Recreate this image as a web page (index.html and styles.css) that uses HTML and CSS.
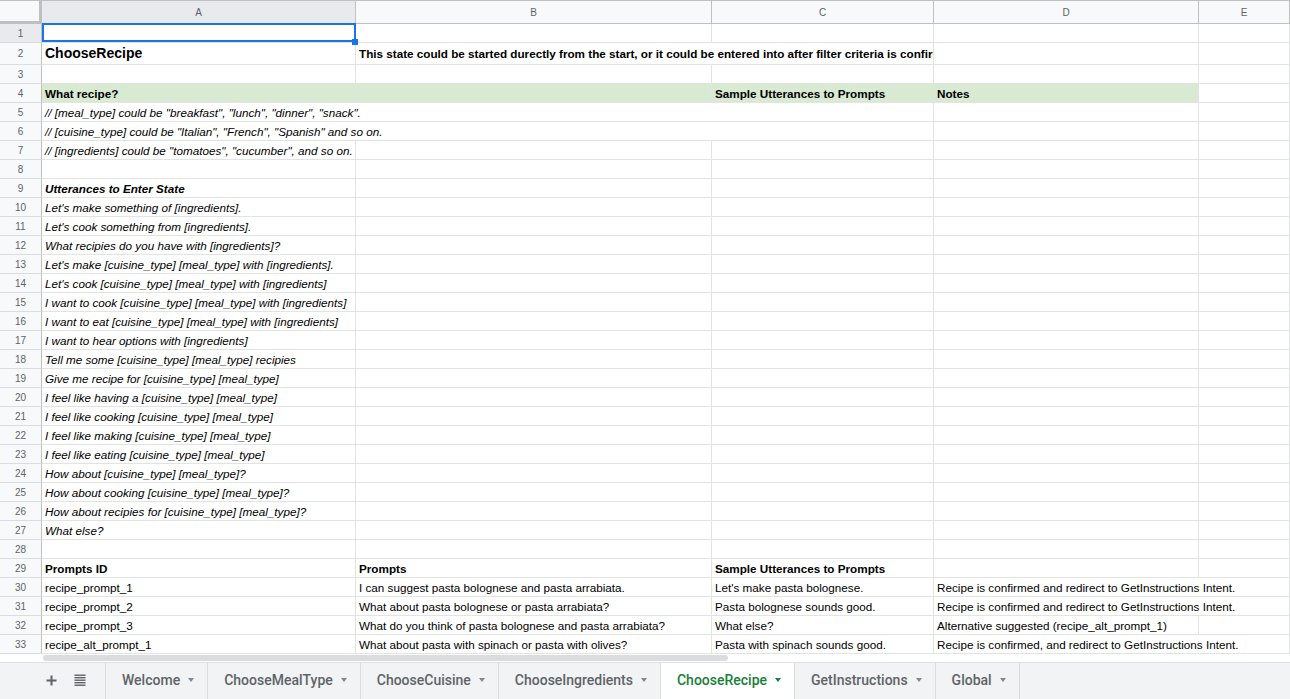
FILE: index.html
```html
<!DOCTYPE html>
<html>
<head>
<meta charset="utf-8">
<title>ChooseRecipe</title>
<link rel="stylesheet" href="styles.css">
</head>
<body>
<div class="sheet">
  <div class="grid">
    <div class="corner"></div>
    <div class="ch sel-h">A</div>
    <div class="ch">B</div>
    <div class="ch">C</div>
    <div class="ch">D</div>
    <div class="ch">E</div>

    <div class="rh sel-h">1</div>
    <div class="c sel"></div><div class="c"></div><div class="c"></div><div class="c"></div><div class="c"></div>

    <div class="rh tall">2</div>
    <div class="c tall title">ChooseRecipe</div>
    <div class="c tall s2 b">This state could be started durectly from the start, or it could be entered into after filter criteria is confirmed.</div>
    <div class="c tall"></div><div class="c tall"></div>

    <div class="rh">3</div>
    <div class="c"></div><div class="c"></div><div class="c"></div><div class="c"></div><div class="c"></div>

    <div class="rh">4</div>
    <div class="c g b">What recipe?</div><div class="c g"></div><div class="c g b">Sample Utterances to Prompts</div><div class="c g b">Notes</div><div class="c"></div>

    <div class="rh">5</div>
    <div class="c s3 i">// [meal_type] could be "breakfast", "lunch", "dinner", "snack".</div><div class="c"></div><div class="c"></div>

    <div class="rh">6</div>
    <div class="c s3 i">// [cuisine_type] could be "Italian", "French", "Spanish" and so on.</div><div class="c"></div><div class="c"></div>

    <div class="rh">7</div>
    <div class="c i">// [ingredients] could be "tomatoes", "cucumber", and so on.</div><div class="c"></div><div class="c"></div><div class="c"></div><div class="c"></div>

    <div class="rh">8</div>
    <div class="c"></div><div class="c"></div><div class="c"></div><div class="c"></div><div class="c"></div>

    <div class="rh">9</div>
    <div class="c i b">Utterances to Enter State</div><div class="c"></div><div class="c"></div><div class="c"></div><div class="c"></div>

    <div class="rh">10</div>
    <div class="c i">Let's make something of [ingredients].</div><div class="c"></div><div class="c"></div><div class="c"></div><div class="c"></div>
    <div class="rh">11</div>
    <div class="c i">Let's cook something from [ingredients].</div><div class="c"></div><div class="c"></div><div class="c"></div><div class="c"></div>
    <div class="rh">12</div>
    <div class="c i">What recipies do you have with [ingredients]?</div><div class="c"></div><div class="c"></div><div class="c"></div><div class="c"></div>
    <div class="rh">13</div>
    <div class="c i">Let's make [cuisine_type] [meal_type] with [ingredients].</div><div class="c"></div><div class="c"></div><div class="c"></div><div class="c"></div>
    <div class="rh">14</div>
    <div class="c i">Let's cook [cuisine_type] [meal_type] with [ingredients]</div><div class="c"></div><div class="c"></div><div class="c"></div><div class="c"></div>
    <div class="rh">15</div>
    <div class="c i">I want to cook [cuisine_type] [meal_type] with [ingredients]</div><div class="c"></div><div class="c"></div><div class="c"></div><div class="c"></div>
    <div class="rh">16</div>
    <div class="c i">I want to eat [cuisine_type] [meal_type] with [ingredients]</div><div class="c"></div><div class="c"></div><div class="c"></div><div class="c"></div>
    <div class="rh">17</div>
    <div class="c i">I want to hear options with [ingredients]</div><div class="c"></div><div class="c"></div><div class="c"></div><div class="c"></div>
    <div class="rh">18</div>
    <div class="c i">Tell me some [cuisine_type] [meal_type] recipies</div><div class="c"></div><div class="c"></div><div class="c"></div><div class="c"></div>
    <div class="rh">19</div>
    <div class="c i">Give me recipe for [cuisine_type] [meal_type]</div><div class="c"></div><div class="c"></div><div class="c"></div><div class="c"></div>
    <div class="rh">20</div>
    <div class="c i">I feel like having a [cuisine_type] [meal_type]</div><div class="c"></div><div class="c"></div><div class="c"></div><div class="c"></div>
    <div class="rh">21</div>
    <div class="c i">I feel like cooking [cuisine_type] [meal_type]</div><div class="c"></div><div class="c"></div><div class="c"></div><div class="c"></div>
    <div class="rh">22</div>
    <div class="c i">I feel like making [cuisine_type] [meal_type]</div><div class="c"></div><div class="c"></div><div class="c"></div><div class="c"></div>
    <div class="rh">23</div>
    <div class="c i">I feel like eating [cuisine_type] [meal_type]</div><div class="c"></div><div class="c"></div><div class="c"></div><div class="c"></div>
    <div class="rh">24</div>
    <div class="c i">How about [cuisine_type] [meal_type]?</div><div class="c"></div><div class="c"></div><div class="c"></div><div class="c"></div>
    <div class="rh">25</div>
    <div class="c i">How about cooking [cuisine_type] [meal_type]?</div><div class="c"></div><div class="c"></div><div class="c"></div><div class="c"></div>
    <div class="rh">26</div>
    <div class="c i">How about recipies for [cuisine_type] [meal_type]?</div><div class="c"></div><div class="c"></div><div class="c"></div><div class="c"></div>
    <div class="rh">27</div>
    <div class="c i">What else?</div><div class="c"></div><div class="c"></div><div class="c"></div><div class="c"></div>
    <div class="rh">28</div>
    <div class="c"></div><div class="c"></div><div class="c"></div><div class="c"></div><div class="c"></div>

    <div class="rh">29</div>
    <div class="c b">Prompts ID</div><div class="c b">Prompts</div><div class="c b">Sample Utterances to Prompts</div><div class="c"></div><div class="c"></div>

    <div class="rh">30</div>
    <div class="c">recipe_prompt_1</div><div class="c">I can suggest pasta bolognese and pasta arrabiata.</div><div class="c">Let's make pasta bolognese.</div><div class="c s2">Recipe is confirmed and redirect to GetInstructions Intent.</div>
    <div class="rh">31</div>
    <div class="c">recipe_prompt_2</div><div class="c">What about pasta bolognese or pasta arrabiata?</div><div class="c">Pasta bolognese sounds good.</div><div class="c s2">Recipe is confirmed and redirect to GetInstructions Intent.</div>
    <div class="rh">32</div>
    <div class="c">recipe_prompt_3</div><div class="c">What do you think of pasta bolognese and pasta arrabiata?</div><div class="c">What else?</div><div class="c">Alternative suggested (recipe_alt_prompt_1)</div><div class="c"></div>
    <div class="rh">33</div>
    <div class="c">recipe_alt_prompt_1</div><div class="c">What about pasta with spinach or pasta with olives?</div><div class="c">Pasta with spinach sounds good.</div><div class="c s2">Recipe is confirmed, and redirect to GetInstructions Intent.</div>
  </div>

  <div class="hscroll"><div class="thumb"></div></div>

  <div class="tabs">
    <div class="tools">
      <svg class="ico" width="11" height="11" viewBox="0 0 11 11"><path d="M5.5 0.5v10M0.5 5.5h10" stroke="#5f6368" stroke-width="2" fill="none"/></svg>
      <svg class="ico" width="12" height="12" viewBox="0 0 12 12"><g fill="#5f6368"><rect x="0.5" y="0.5" width="11" height="1.4"/><rect x="0.5" y="3" width="11" height="1.4"/><rect x="0.5" y="5.5" width="11" height="1.4"/><rect x="0.5" y="8" width="11" height="1.4"/><rect x="0.5" y="10.5" width="11" height="1.4"/></g></svg>
    </div>
    <div class="tab">Welcome<span class="arr"></span></div>
    <div class="tab">ChooseMealType<span class="arr"></span></div>
    <div class="tab">ChooseCuisine<span class="arr"></span></div>
    <div class="tab">ChooseIngredients<span class="arr"></span></div>
    <div class="tab active">ChooseRecipe<span class="arr"></span></div>
    <div class="tab">GetInstructions<span class="arr"></span></div>
    <div class="tab last">Global<span class="arr"></span></div>
  </div>
</div>
</body>
</html>
```

FILE: styles.css
```css
html, body {
  margin: 0;
  padding: 0;
  background: #ffffff;
}
body {
  width: 1290px;
  height: 699px;
  overflow: hidden;
  font-family: "Liberation Sans", Arial, sans-serif;
  color: #000;
}
.sheet {
  display: flex;
  flex-direction: column;
  height: 699px;
}
.grid {
  display: grid;
  grid-template-columns: 42px 314px 356px 222px 265px 91px;
  grid-template-rows: 24px 19px 22px repeat(31, 19px);
}
.corner {
  background: #f8f9fa;
  border-top: 1px solid #c0c0c0;
  border-right: 3px solid #c0c0c0;
  border-bottom: 3px solid #c0c0c0;
  box-sizing: border-box;
}
.ch {
  box-sizing: border-box;
  background: #f8f9fa;
  border-top: 1px solid #c0c0c0;
  border-right: 1px solid #c0c0c0;
  border-bottom: 1px solid #c0c0c0;
  font-size: 10px;
  color: #5f6368;
  text-align: center;
  line-height: 23px;
}
.ch.sel-h {
  background: #e8eaed;
}
.rh {
  box-sizing: border-box;
  background: #f8f9fa;
  border-right: 1px solid #c0c0c0;
  border-bottom: 1px solid #dadce0;
  font-size: 10px;
  color: #5f6368;
  text-align: center;
  line-height: 19px;
}
.rh.sel-h {
  background: #e8eaed;
}
.rh.tall {
  line-height: 22px;
}
.c {
  box-sizing: border-box;
  border-right: 1px solid #e2e3e3;
  border-bottom: 1px solid #e2e3e3;
  padding: 1px 3px 0;
  font-size: 11.7px;
  line-height: 18px;
  white-space: nowrap;
  overflow: hidden;
}
.c.tall {
  line-height: 21px;
  padding-top: 0;
}
.s2 { grid-column: span 2; }
.s3 { grid-column: span 3; }
.b { font-weight: bold; }
.i { font-style: italic; }
.g { background: #d9ead3; }
.title {
  font-weight: bold;
  font-size: 14px;
}
.sel {
  position: relative;
  overflow: visible;
  z-index: 2;
}
.sel::after {
  content: "";
  position: absolute;
  top: -1px;
  left: 0;
  right: -1px;
  bottom: 0;
  border: 2px solid #1a73e8;
}
.sel::before {
  content: "";
  position: absolute;
  right: -3px;
  bottom: -3px;
  width: 6px;
  height: 6px;
  background: #1a73e8;
  z-index: 3;
}
.hscroll {
  height: 8px;
  padding-left: 43px;
  box-sizing: border-box;
  padding-top: 1px;
}
.thumb {
  width: 685px;
  height: 6px;
  border-radius: 3px;
  background: #dadce0;
}
.tabs {
  flex: 1;
  display: flex;
  background: #f1f3f4;
  border-top: 1px solid #e0e0e0;
  font-family: Roboto, "Liberation Sans", Arial, sans-serif;
  font-weight: 500;
  font-size: 14px;
  color: #5f6368;
}
.tools {
  width: 105px;
  display: flex;
  align-items: center;
  gap: 17px;
  padding-left: 46px;
  padding-bottom: 2px;
  box-sizing: border-box;
}
.tab {
  display: flex;
  align-items: center;
  gap: 8px;
  padding: 0 13px 2px 16px;
  border-left: 1px solid #dadce0;
}
.tab.last {
  border-right: 1px solid #dadce0;
}
.tab.active {
  background: #ffffff;
  color: #188038;
}
.arr {
  width: 0;
  height: 0;
  border-left: 3px solid transparent;
  border-right: 3px solid transparent;
  border-top: 4px solid #80868b;
}
.tab.active .arr {
  border-top-color: #188038;
}
```
